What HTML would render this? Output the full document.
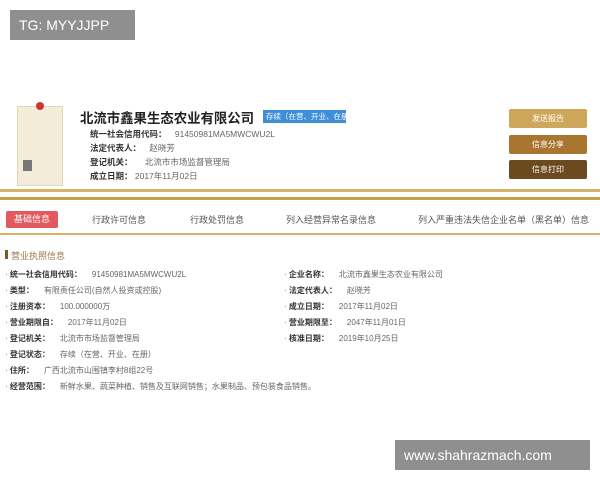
<!DOCTYPE html>
<html><head><meta charset="utf-8"><style>
*{margin:0;padding:0;box-sizing:border-box}
body{width:600px;height:480px;background:#fff;position:relative;overflow:hidden;font-family:"Liberation Sans","Noto Sans CJK SC",sans-serif;color:#555}
.a{position:absolute;white-space:nowrap}
.wm{background:#8f8f8f;color:#fff;font-size:14px;line-height:30px;padding-left:9px}
.lab{font-weight:bold;color:#333;font-size:8.5px}
.s{font-size:8.5px;color:#666}
.btn{position:absolute;left:509px;width:78px;height:19px;color:#fff;font-size:8px;text-align:center;line-height:19px;border-radius:2px}
.tab{position:absolute;top:213px;font-size:9px;color:#555}
.r{position:absolute;font-size:8px;color:#666;white-space:nowrap}
.r b{color:#333;margin-right:10px}
</style></head><body>
<div class="a wm" style="left:10px;top:10px;width:125px;height:30px">TG: MYYJJPP</div>
<div class="a" style="left:17px;top:106px;width:46px;height:80px;background:#f3ecd9;border:1px solid #e0d6bc"></div>
<div class="a" style="left:36px;top:102px;width:8px;height:8px;border-radius:50%;background:#c33"></div>
<div class="a" style="left:23px;top:160px;width:9px;height:11px;background:#777"></div>
<div class="a" style="left:80px;top:107px;font-size:13.4px;font-weight:bold;color:#222">北流市鑫果生态农业有限公司</div>
<div class="a" style="left:263px;top:110px;width:83px;height:13px;background:#3f8fd8;color:#fff;font-size:7.5px;line-height:13px;padding-left:3px">存续（在营、开业、在册）</div>
<div class="a lab" style="left:90px;top:128px">统一社会信用代码： <span class="s" style="font-weight:normal;margin-left:6px">91450981MA5MWCWU2L</span></div>
<div class="a lab" style="left:90px;top:142px">法定代表人： <span class="s" style="font-weight:normal;margin-left:6px">赵晓芳</span></div>
<div class="a lab" style="left:90px;top:156px">登记机关： <span class="s" style="font-weight:normal;margin-left:10px">北流市市场监督管理局</span></div>
<div class="a lab" style="left:90px;top:170px">成立日期： <span class="s" style="font-weight:normal">2017年11月02日</span></div>
<div class="btn" style="top:109px;background:#cfa75a">发送报告</div>
<div class="btn" style="top:135px;background:#a8762f">信息分享</div>
<div class="btn" style="top:160px;background:#6a4a1e">信息打印</div>
<div class="a" style="left:0;top:189px;width:600px;height:3px;background:#d6b36a"></div>
<div class="a" style="left:0;top:197px;width:600px;height:3px;background:#c9a048"></div>
<div class="a" style="left:6px;top:211px;width:52px;height:17px;background:#e35a5e;color:#fff;font-size:9px;text-align:center;line-height:17px;border-radius:2px">基础信息</div>
<div class="tab" style="left:92px">行政许可信息</div>
<div class="tab" style="left:190px">行政处罚信息</div>
<div class="tab" style="left:286px">列入经营异常名录信息</div>
<div class="tab" style="left:418px">列入严重违法失信企业名单（黑名单）信息</div>
<div class="a" style="left:0;top:233px;width:600px;height:2px;background:#d6b36a"></div>
<div class="a" style="left:5px;top:250px;width:3px;height:9px;background:#7a5a2a"></div>
<div class="a" style="left:11px;top:249px;font-size:9px;color:#9a7a4a">营业执照信息</div>
<div class="r" style="left:5px;top:269px">· <b>统一社会信用代码：</b>91450981MA5MWCWU2L</div>
<div class="r" style="left:5px;top:285px">· <b>类型：</b>有限责任公司(自然人投资或控股)</div>
<div class="r" style="left:5px;top:301px">· <b>注册资本：</b>100.000000万</div>
<div class="r" style="left:5px;top:317px">· <b>营业期限自：</b>2017年11月02日</div>
<div class="r" style="left:5px;top:333px">· <b>登记机关：</b>北流市市场监督管理局</div>
<div class="r" style="left:5px;top:349px">· <b>登记状态：</b>存续（在营、开业、在册）</div>
<div class="r" style="left:5px;top:365px">· <b>住所：</b>广西北流市山围镇李村8组22号</div>
<div class="r" style="left:5px;top:381px">· <b>经营范围：</b>新鲜水果、蔬菜种植、销售及互联网销售；水果制品、预包装食品销售。</div>
<div class="r" style="left:284px;top:269px">· <b>企业名称：</b>北流市鑫果生态农业有限公司</div>
<div class="r" style="left:284px;top:285px">· <b>法定代表人：</b>赵晓芳</div>
<div class="r" style="left:284px;top:301px">· <b>成立日期：</b>2017年11月02日</div>
<div class="r" style="left:284px;top:317px">· <b>营业期限至：</b>2047年11月01日</div>
<div class="r" style="left:284px;top:333px">· <b>核准日期：</b>2019年10月25日</div>
<div class="a wm" style="left:395px;top:440px;width:195px;height:30px;font-size:14px">www.shahrazmach.com</div>
</body></html>
